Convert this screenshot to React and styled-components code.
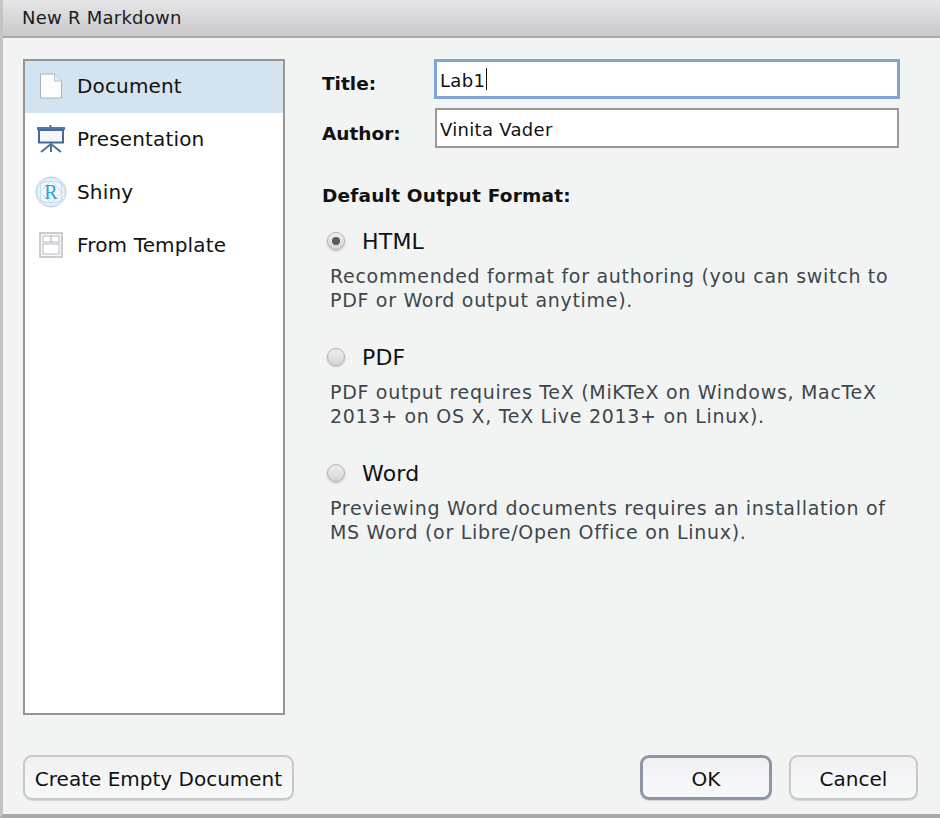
import styled, { createGlobalStyle } from 'styled-components'

const GlobalStyle = createGlobalStyle`
    html, body {
        margin: 0;
        padding: 0;
        background: #f2f4f3;
    }
    body {
        font-family: "DejaVu Sans", "Liberation Sans", sans-serif;
        color: #111;
    }
`

const Dialog = styled.div`
    width: 940px;
    height: 818px;
    box-sizing: border-box;
    display: flex;
    flex-direction: column;
    overflow: hidden;
    background: #f2f4f3;
    border-left: 3px solid #c4c4c4;
    border-bottom: 4px solid #a9a9a9;
`
const TitleBar = styled.div`
    height: 38px;
    box-sizing: border-box;
    flex: none;
    display: flex;
    align-items: center;
    padding: 0 0 2px 19px;
    font-size: 18px;
    letter-spacing: 0.25px;
    color: #1a1a1a;
    background: linear-gradient(#e6e6e8, #c9c9cb);
    border-bottom: 2px solid #a9a9a9;
`
const Body = styled.div`
    flex: 1;
    display: flex;
    flex-direction: column;
    padding: 21px 22px 14px 20px;
`
const Main = styled.div`
    flex: 1;
    display: flex;
    min-height: 0;
`
const TypeList = styled.ul`
    width: 262px;
    height: 656px;
    box-sizing: border-box;
    flex: none;
    margin: 0;
    padding: 0;
    list-style: none;
    background: #fff;
    border: 2px solid #969696;
`
const TypeRow = styled.li`
    height: ${({ $selected }) => ($selected ? 52 : 53)}px;
    margin-bottom: ${({ $selected }) => ($selected ? 1 : 0)}px;
    box-sizing: border-box;
    padding-bottom: ${({ $selected }) => ($selected ? 3 : 4)}px;
    display: flex;
    align-items: center;
    font-size: 20px;
    letter-spacing: 0.15px;
    color: #111;
    background: ${({ $selected }) => ($selected ? '#d3e3f0' : 'transparent')};
`
const TypeIcon = styled.span`
    width: 52px;
    flex: none;
    display: flex;
    justify-content: center;
    padding-right: 1px;
    box-sizing: border-box;
`
const FormPane = styled.div`
    flex: 1;
    padding: 0 0 0 37px;
    min-width: 0;
`
const FieldRow = styled.div`
    display: flex;
    align-items: center;
    height: 40px;
    margin-bottom: ${({ $gap }) => $gap}px;
`
const FieldLabel = styled.label`
    width: 113px;
    flex: none;
    padding-top: ${({ $drop }) => $drop}px;
    font-size: 18.5px;
    font-weight: bold;
`
const TextBox = styled.div`
    width: ${({ $focused }) => ($focused ? 466 : 464)}px;
    height: 40px;
    box-sizing: border-box;
    display: flex;
    align-items: center;
    margin-left: ${({ $focused }) => ($focused ? -1 : 0)}px;
    padding: 3px 0 0 3px;
    font-size: 18px;
    letter-spacing: 0.3px;
    color: #111;
    background: #fff;
    border: ${({ $focused }) => ($focused ? '3px solid #81a3d6' : '2px solid #999')};
`
const Caret = styled.span`
    width: 1px;
    height: 22px;
    margin: -3px 0 0 1px;
    background: #111;
`
const SectionTitle = styled.h2`
    margin: 36px 0 20px;
    font-size: 18.5px;
    line-height: 24px;
    font-weight: bold;
    letter-spacing: 0.2px;
`
const FormatOption = styled.div`
    margin-bottom: 32px;
`
const OptionHead = styled.div`
    display: flex;
    align-items: center;
    gap: 17px;
    height: 26px;
    padding-left: 5px;
    font-size: 22px;
    letter-spacing: 0.2px;
`
const Radio = styled.span`
    width: 18px;
    height: 18px;
    box-sizing: border-box;
    flex: none;
    display: flex;
    align-items: center;
    justify-content: center;
    border-radius: 50%;
    border: 1px solid #b4b4b4;
    background: linear-gradient(#eeeeee, #d6d6d6);
    box-shadow: 0 1px 2px rgba(0, 0, 0, 0.25);
    &::after {
        content: '';
        width: 8px;
        height: 8px;
        border-radius: 50%;
        background: ${({ $checked }) => ($checked ? '#5c5c5e' : 'transparent')};
    }
`
const OptionHelp = styled.p`
    margin: 10px 0 0 8px;
    font-size: 19px;
    line-height: 24px;
    letter-spacing: 0.7px;
    white-space: nowrap;
    color: #3d464c;
`
const Footer = styled.div`
    flex: none;
    display: flex;
    align-items: center;
    gap: 17px;
`
const Spacer = styled.div`
    flex: 1;
`
const Button = styled.button`
    height: 45px;
    width: ${({ $width }) => $width}px;
    box-sizing: border-box;
    padding: 2px 0 0;
    font-family: inherit;
    font-size: 20px;
    color: #111;
    border-radius: 9px;
    background: linear-gradient(#f0f0f3, #f5f6f7 55%, #f7f8f8);
    border: ${({ $primary }) => ($primary ? '3px solid #8c97a6' : '2px solid #c6c8ca')};
    box-shadow: 0 1px 1px rgba(0, 0, 0, 0.12);
`

const DocumentIcon = () => (
    <svg width="24" height="26" viewBox="0 0 24 26">
        <path d="M1.5 1 H15.5 L22.5 8 V25 H1.5 Z" fill="#fdfdfe" stroke="#aab2bb" strokeWidth="1" />
        <path d="M15.5 1 V8 H22.5" fill="#e6e9ec" stroke="#b8bfc6" strokeWidth="1" />
    </svg>
)

const PresentationIcon = () => (
    <svg width="30" height="28" viewBox="0 0 30 28">
        <rect x="13.5" y="0" width="2" height="3" fill="#4d6f9c" />
        <rect x="1" y="2" width="28" height="3" fill="#5079a8" />
        <path d="M3 5 H27 V17.5 H3 Z" fill="#f4f6f8" stroke="#466a98" strokeWidth="2" />
        <path d="M15 18 V27 M15 19 L5 27 M15 19 L25 27" stroke="#4d7099" strokeWidth="2" fill="none" />
    </svg>
)

const ShinyIcon = () => (
    <svg width="32" height="32" viewBox="0 0 32 32">
        <circle cx="16" cy="16" r="15" fill="#f3f8fc" stroke="#b4d0e8" strokeWidth="1" />
        <path
            d="M16 1 L6 7 L1 16 L6 25 L16 31 L26 25 L31 16 L26 7 Z M6 7 L16 5 L26 7 L27 16 L26 25 L16 27 L6 25 L5 16 Z M16 1 V5 M1 16 H5 M27 16 H31 M16 27 V31 M5 16 L16 5 L27 16 L16 27 Z"
            fill="none"
            stroke="#bad4ea"
            strokeWidth="0.8"
        />
        <text x="16" y="22.5" textAnchor="middle" fontFamily="Liberation Serif, serif" fontSize="20" fill="#2f9fd6">R</text>
    </svg>
)

const TemplateIcon = () => (
    <svg width="24" height="26" viewBox="0 0 24 26">
        <rect x="1" y="1" width="22" height="24" fill="#f8f9fa" stroke="#a9aeb4" strokeWidth="1.2" />
        <rect x="4" y="4" width="8" height="6" fill="#fff" stroke="#b5bac0" strokeWidth="1" />
        <rect x="12" y="4" width="8" height="6" fill="#fff" stroke="#b5bac0" strokeWidth="1" />
        <rect x="4" y="12" width="16" height="10" fill="#fff" stroke="#b5bac0" strokeWidth="1" />
    </svg>
)

const types = [
    { label: 'Document', icon: <DocumentIcon />, selected: true },
    { label: 'Presentation', icon: <PresentationIcon /> },
    { label: 'Shiny', icon: <ShinyIcon /> },
    { label: 'From Template', icon: <TemplateIcon /> },
]

const formats = [
    {
        label: 'HTML',
        checked: true,
        help: ['Recommended format for authoring (you can switch to', 'PDF or Word output anytime).'],
    },
    {
        label: 'PDF',
        help: ['PDF output requires TeX (MiKTeX on Windows, MacTeX', '2013+ on OS X, TeX Live 2013+ on Linux).'],
    },
    {
        label: 'Word',
        help: ['Previewing Word documents requires an installation of', 'MS Word (or Libre/Open Office on Linux).'],
    },
]

const App = () => {
    return (
        <Dialog>
            <GlobalStyle />
            <TitleBar>New R Markdown</TitleBar>
            <Body>
                <Main>
                    <TypeList>
                        {types.map((type) => (
                            <TypeRow key={type.label} $selected={type.selected}>
                                <TypeIcon>{type.icon}</TypeIcon>
                                {type.label}
                            </TypeRow>
                        ))}
                    </TypeList>
                    <FormPane>
                        <FieldRow $gap={9}>
                            <FieldLabel $drop={9}>Title:</FieldLabel>
                            <TextBox $focused>
                                Lab1
                                <Caret />
                            </TextBox>
                        </FieldRow>
                        <FieldRow $gap={0}>
                            <FieldLabel $drop={10}>Author:</FieldLabel>
                            <TextBox>Vinita Vader</TextBox>
                        </FieldRow>
                        <SectionTitle>Default Output Format:</SectionTitle>
                        {formats.map((format) => (
                            <FormatOption key={format.label}>
                                <OptionHead>
                                    <Radio $checked={format.checked} />
                                    {format.label}
                                </OptionHead>
                                <OptionHelp>
                                    {format.help[0]}
                                    <br />
                                    {format.help[1]}
                                </OptionHelp>
                            </FormatOption>
                        ))}
                    </FormPane>
                </Main>
                <Footer>
                    <Button $width={271}>Create Empty Document</Button>
                    <Spacer />
                    <Button $primary $width={132}>OK</Button>
                    <Button $width={129}>Cancel</Button>
                </Footer>
            </Body>
        </Dialog>
    )
}

export default App
